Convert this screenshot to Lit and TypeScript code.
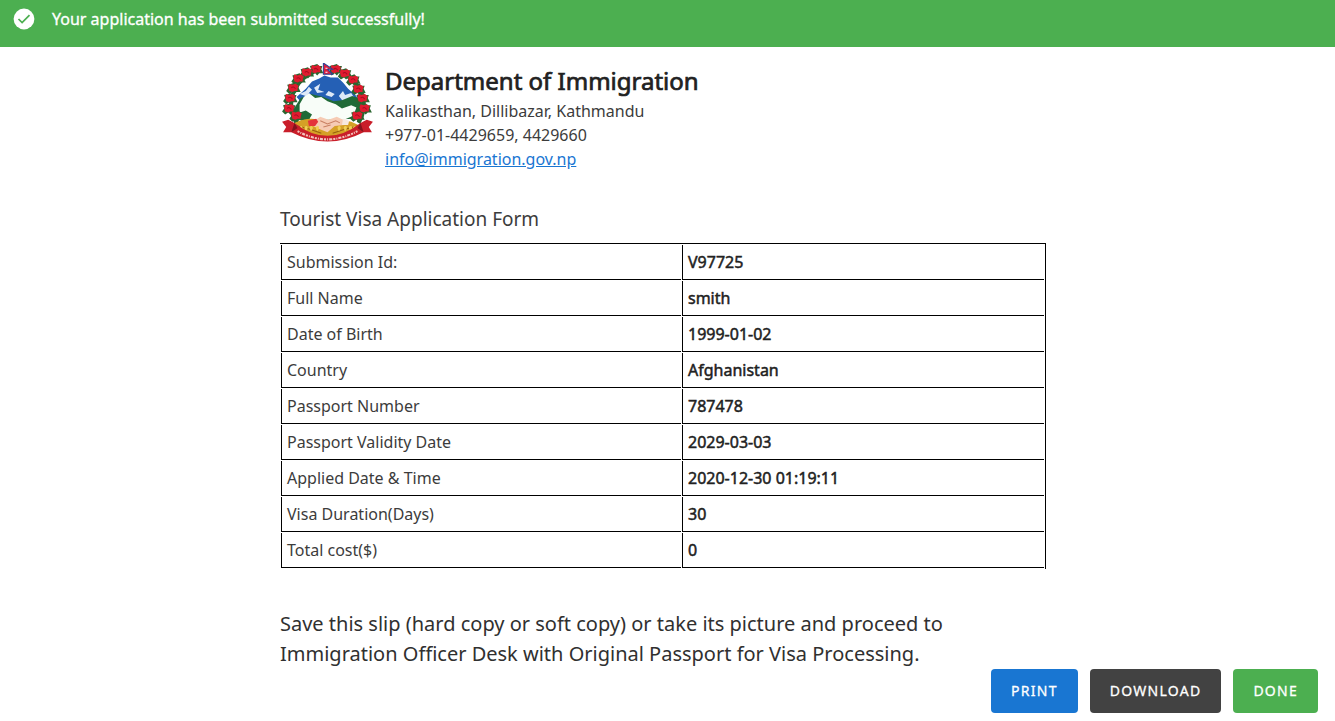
import { LitElement, html, css, svg } from "lit";
import { customElement } from "lit/decorators.js";

const ROSES: [number, number][] = [
  [35, 6], [26, 9], [18, 15], [13, 24], [10, 34], [9, 44], [16, 51],
  [54, 6], [63, 10], [71, 16], [76, 25], [80, 34], [82, 44], [75, 51],
];

const WHEAT = [20, 25, 30, 36, 57, 63, 68, 72];

@customElement("nepal-emblem")
export class NepalEmblem extends LitElement {
  static styles = css`
    :host { display: block; }
    svg { display: block; width: 100%; height: auto; }
  `;

  render() {
    return html`<svg viewBox="0 0 92 80" role="img" aria-label="Emblem of Nepal">
      <path d="M28 11C12 21 5 40 16 58M63 11C79 21 87 40 76 58" fill="none" stroke="#2b6630" stroke-width="4"/>
      <path d="M16 33 25 25 31 18 38 15 43 12 49 14 56 14 61 19 66 25 73 31 77 36 66 42H24Z" fill="#2560b5"/>
      <path d="M19 30 25 27 28 23 31 26 25 32ZM33 24 39 20 37 26 43 28 36 29ZM57 32 61 27 63 31 69 29 72 34 61 37ZM47 27 53 30 50 33 44 31Z" fill="#dce8f7"/>
      <path d="M13 45 20 34 30 30 42 33 52 37 60 36 70 32 79 35 80 44 72 54 22 56Z" fill="#206a37"/>
      <path d="M19 40 23 33 28 29 34 34 40 33 46 37 54 40 60 44 69 41 74 43 71 51 62 55H28L31 50 25 46 19 48Z" fill="#f8fdf8"/>
      <path d="M16 46 24 49 29 53 25 58 17 54Z" fill="#206a37"/>
      <path d="M14 58Q28 51 42 56L55 54 69 57 78 61 67 71Q46 77 25 71Z" fill="#d5a026"/>
      <path d="M32 57 39 52 47 55 55 52 63 56 62 60 53 61 46 67 38 64 32 61Z" fill="#f6cbb4"/>
      <path d="M39 56 46 59 54 56 58 58M42 62 49 60" fill="none" stroke="#c87f62"/>
      <path d="M27 56 35 54 37 57 34 61 28 61Z" fill="#e4333b"/>
      <path d="M61 54 67 56 66 60 60 60Z" fill="#f7e8df"/>
      <path d="M17 61Q30 64 40 68M75 61Q62 64 51 68" fill="none" stroke="#94600f"/>
      ${WHEAT.map((x) => svg`<path d="M${x} 66q-3-5 1-5q2 2-1 5Z" fill="#f0cf55"/>`)}
      ${ROSES.map(([x, y]) => svg`<g transform="translate(${x} ${y})">
        <path d="M-7 3-5 0-6-3-2-4 1-5 3-3 6-3 5 0 7 4 3 4 1 6-1 4-4 6Z" fill="#2b6630"/>
        <path d="M-5-1-4-4-1-3 2-4 5-2 4 1 4 3 1 3-1 4-4 3Z" fill="#e01b2f"/>
        <path d="M-2 0Q0-2 2 1" fill="none" stroke="#a80d22"/>
      </g>`)}
      <path d="M2 57 8 55 14 58Q46 83 78 58L84 55 90 57 86 62 89 67 81 67Q46 85 11 67L3 67 6 62Z" fill="#c91e2a"/>
      <path d="M14 58 11 67 17 63ZM78 58 81 67 75 63Z" fill="#84131d"/>
      <path d="M17 66Q46 82 75 66" fill="none" stroke="#f3c3be" stroke-width="2" stroke-dasharray="2 1 1 1 3 1"/>
      <path d="M42 0 51 6H46L51 11H42Z" fill="#dc1e3e" stroke="#2b4294"/>
      <path d="M44 5h2M44 9h2" stroke="#fff"/>
    </svg>`;
  }
}

const ROWS: [string, string][] = [
  ["Submission Id:", "V97725"],
  ["Full Name", "smith"],
  ["Date of Birth", "1999-01-02"],
  ["Country", "Afghanistan"],
  ["Passport Number", "787478"],
  ["Passport Validity Date", "2029-03-03"],
  ["Applied Date & Time", "2020-12-30 01:19:11"],
  ["Visa Duration(Days)", "30"],
  ["Total cost($)", "0"],
];

@customElement("app-root")
export class AppRoot extends LitElement {
  static styles = css`
    :host {
      display: block;
      font: 400 16px/24px "Noto Sans", sans-serif;
      color: #3c3c3c;
    }
    .banner {
      display: flex;
      gap: 16px;
      padding: 7px 12px 16px;
      background: #4caf50;
      color: #fff;
      -webkit-text-stroke: 0.02em;
    }
    .banner svg { width: 24px; height: 24px; }
    main { max-width: 775px; margin: 0 auto; padding-top: 16px; }
    header { display: flex; gap: 10px; }
    .emblem { width: 95px; }
    h1 {
      margin: 0;
      color: #212121;
      font-size: 24px;
      line-height: 36px;
      font-weight: 400;
      -webkit-text-stroke: 0.03em;
    }
    address { font-style: normal; }
    p { margin: 0; }
    a { color: #1976d2; }
    h2 { margin: 32px 0 8px; font-size: 19px; line-height: 32px; font-weight: 400; }
    table {
      width: 100%;
      max-width: 766px;
      border: solid #000;
      border-width: 1px 1px 0 0;
      border-spacing: 1px;
    }
    th, td {
      box-sizing: border-box;
      padding: 5px;
      border: solid #000;
      border-width: 0 0 1px 1px;
      text-align: left;
      font-weight: 400;
    }
    th { width: 400px; }
    td { color: #212121; -webkit-text-stroke: 0.03em; }
    .note { margin-top: 40px; color: #303030; font-size: 20px; line-height: 30px; }
    footer { display: flex; justify-content: flex-end; gap: 12px; padding: 0 17px 8px; }
    button {
      height: 44px;
      padding: 0 20px;
      border: 0;
      border-radius: 4px;
      color: #fff;
      background: #1976d2;
      font: 400 14px/20px "Noto Sans", sans-serif;
      -webkit-text-stroke: 0.02em;
      letter-spacing: 0.09em;
      text-transform: uppercase;
    }
    .dark { background: #424242; }
    .success { background: #4caf50; }
  `;

  render() {
    return html`
      <div class="banner" role="status">
        <svg viewBox="0 0 24 24" aria-hidden="true"><circle cx="12" cy="12" r="10.4" fill="#fff"/><path d="m6.5 12 3.6 3.6 7.4-7.4" fill="none" stroke="#4caf50" stroke-width="1.7"/></svg>
        <span>Your application has been submitted successfully!</span>
      </div>
      <main>
        <header>
          <nepal-emblem class="emblem"></nepal-emblem>
          <div>
            <h1>Department of Immigration</h1>
            <address>
              <p>Kalikasthan, Dillibazar, Kathmandu</p>
              <p>+977-01-4429659, 4429660</p>
              <a href="mailto:info@immigration.gov.np">info@immigration.gov.np</a>
            </address>
          </div>
        </header>
        <h2>Tourist Visa Application Form</h2>
        <table>
          <tbody>
            ${ROWS.map(([label, value]) => html`<tr><th scope="row">${label}</th><td>${value}</td></tr>`)}
          </tbody>
        </table>
        <p class="note">Save this slip (hard copy or soft copy) or take its picture and proceed to Immigration Officer Desk with Original Passport for Visa Processing.</p>
      </main>
      <footer>
        <button type="button">Print</button>
        <button type="button" class="dark">Download</button>
        <button type="button" class="success">Done</button>
      </footer>
    `;
  }
}
